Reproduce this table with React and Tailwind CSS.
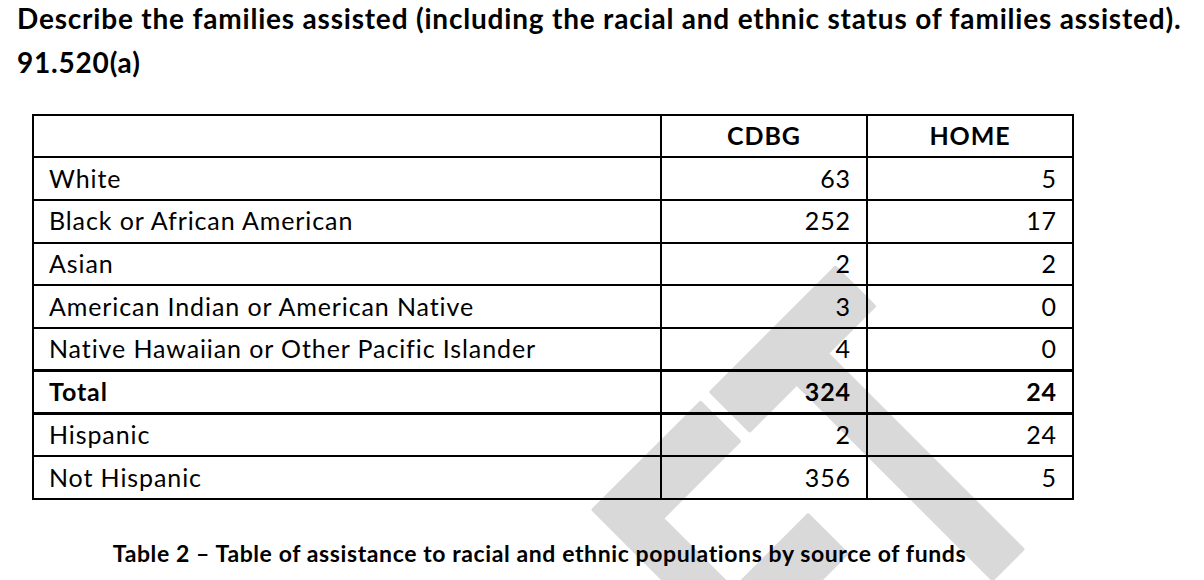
const rows = [
  { label: 'White', cdbg: '63', home: '5' },
  { label: 'Black or African American', cdbg: '252', home: '17' },
  { label: 'Asian', cdbg: '2', home: '2' },
  { label: 'American Indian or American Native', cdbg: '3', home: '0' },
  { label: 'Native Hawaiian or Other Pacific Islander', cdbg: '4', home: '0' },
  { label: 'Total', cdbg: '324', home: '24', total: true },
  { label: 'Hispanic', cdbg: '2', home: '24' },
  { label: 'Not Hispanic', cdbg: '356', home: '5' },
]

// faint "DRAFT" stamp running diagonally behind the table
const Watermark = () => (
  <svg className="absolute inset-0 w-full h-full pointer-events-none" viewBox="0 0 1204 580">
    <text
      x="0"
      y="0"
      textAnchor="end"
      transform="translate(1072 499) rotate(-45) scale(1 1.6)"
      fill="#d9d9d9"
      stroke="#d9d9d9"
      strokeWidth="3"
      strokeLinejoin="round"
      fontFamily="'Liberation Sans', Arial, sans-serif"
      fontWeight="700"
      fontSize="300"
    >
      DRAFT
    </text>
  </svg>
)

export default function App() {
  return (
    <div className="relative w-[1204px] h-[580px] overflow-hidden bg-white text-black font-['Lato',sans-serif]">
      <Watermark />

      <div className="relative">
        {/* Question heading */}
        <h1 className="pl-[17px] -mt-[4px] text-[28px] leading-[44px] tracking-[0.8px] font-bold">
          Describe the families assisted (including the racial and ethnic status of families assisted).
          <br />
          91.520(a)
        </h1>

        {/* Table */}
        <table className="ml-[32px] mt-[30px] border-collapse table-fixed text-[25px] tracking-[0.9px]">
          <colgroup>
            <col className="w-[628px]" />
            <col className="w-[206px]" />
            <col className="w-[206px]" />
          </colgroup>
          <thead>
            <tr className="h-[42px]">
              <th className="border-2 border-black"></th>
              <th className="border-2 border-black font-bold text-center">CDBG</th>
              <th className="border-2 border-black font-bold text-center">HOME</th>
            </tr>
          </thead>
          <tbody>
            {rows.map((r) => (
              <tr key={r.label} className="h-[42.75px]">
                <td
                  className={
                    r.total
                      ? 'border-2 border-y-[3px] border-black pl-[15px] font-bold'
                      : 'border-2 border-black pl-[15px]'
                  }
                >
                  {r.label}
                </td>
                <td
                  className={
                    r.total
                      ? 'border-2 border-y-[3px] border-black pr-[15px] text-right font-bold'
                      : 'border-2 border-black pr-[15px] text-right'
                  }
                >
                  {r.cdbg}
                </td>
                <td
                  className={
                    r.total
                      ? 'border-2 border-y-[3px] border-black pr-[15px] text-right font-bold'
                      : 'border-2 border-black pr-[15px] text-right'
                  }
                >
                  {r.home}
                </td>
              </tr>
            ))}
          </tbody>
        </table>

        {/* Caption */}
        <p className="w-[1079px] mt-[38px] text-center text-[23px] leading-[30px] tracking-[0.6px] font-bold">
          Table 2 – Table of assistance to racial and ethnic populations by source of funds
        </p>
      </div>
    </div>
  )
}
